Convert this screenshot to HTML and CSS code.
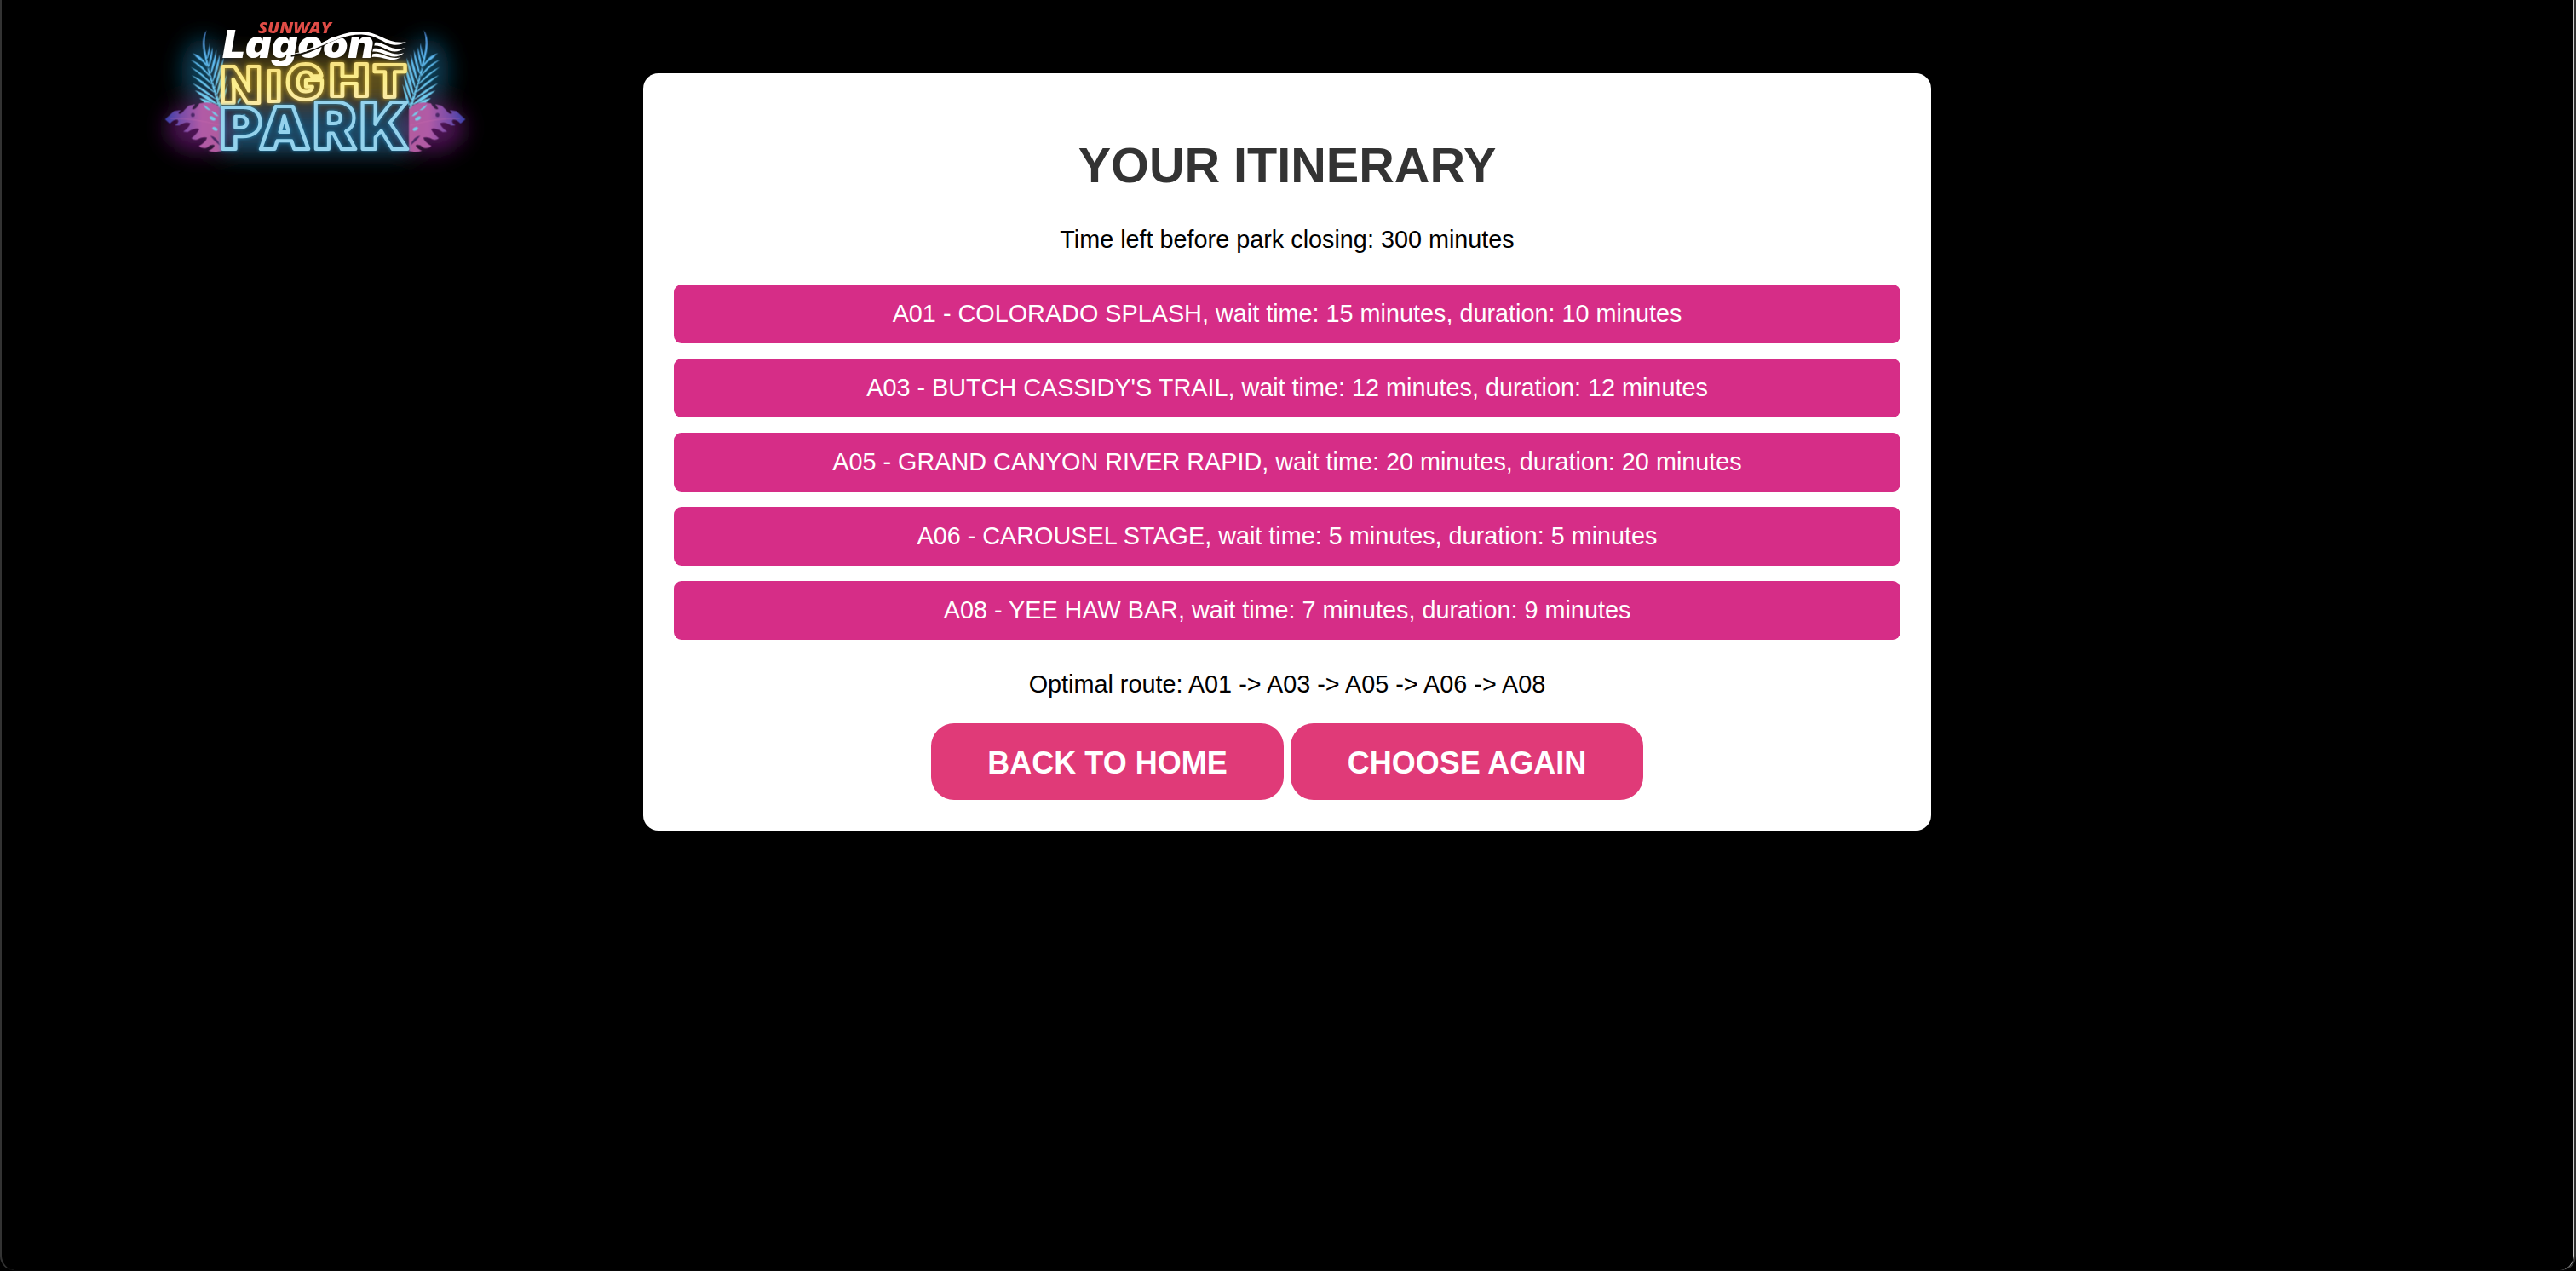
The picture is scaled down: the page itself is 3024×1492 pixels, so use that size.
FILE: index.html
```html
<!DOCTYPE html>
<html lang="en">
<head>
<meta charset="utf-8">
<title>Your Itinerary</title>
<link rel="stylesheet" href="styles.css">
</head>
<body>
<div class="page">
  <header class="brand">
    <svg class="logo" viewBox="0 0 1260 660" role="img" aria-label="Sunway Lagoon Night Park">
      <defs>
        <filter id="haze" x="-50%" y="-50%" width="200%" height="200%"><feGaussianBlur stdDeviation="38"/></filter>
        <linearGradient id="frond" x1="0" y1="0" x2="0" y2="1">
          <stop offset="0" stop-color="#4a83cf"/><stop offset=".35" stop-color="#5db9ef"/><stop offset="1" stop-color="#79d3ee"/>
        </linearGradient>
        <linearGradient id="leaf" x1="0" y1="0" x2="1" y2="0">
          <stop offset="0" stop-color="#3940a8"/><stop offset=".3" stop-color="#7b4da8"/><stop offset=".65" stop-color="#b15ba6"/><stop offset="1" stop-color="#b35c9f"/>
        </linearGradient>
        <linearGradient id="gold" x1="0" y1="0" x2="0" y2="1">
          <stop offset="0" stop-color="#f5dc7c"/><stop offset=".5" stop-color="#fbee8d"/><stop offset="1" stop-color="#fbe7b0"/>
        </linearGradient>
        <g id="plant">
          <path fill="url(#frond)" d="M247 106Q225 140 240 196Q252 260 296 400L300 375Q262 280 248 200Q234 150 247 106Z
            M260 150Q262 184 247 216Q250 184 260 150Z
            M197 188Q236 194 258 250Q230 206 197 188Z M190 210Q236 224 266 280Q230 236 190 210Z
            M191 236Q238 256 272 304Q232 268 191 236Z M194 264Q242 282 280 332Q236 298 194 264Z
            M196 292Q244 312 286 354Q238 328 196 292Z M206 318Q252 330 292 372Q244 354 206 318Z
            M222 345Q262 350 298 392Q252 376 222 345Z M204 194Q232 206 248 226Q222 214 204 194Z
            M268 166Q272 204 252 246Q256 206 268 166Z M282 175Q284 222 258 270Q266 224 282 175Z
            M294 190Q294 242 266 296Q276 240 294 190Z M308 203Q302 262 274 320Q284 258 308 203Z
            M312 232Q308 292 281 342Q289 284 312 232Z M318 262Q312 320 288 362Q295 312 318 262Z
            M322 296Q314 350 294 384Q300 340 322 296Z"/>
          <path fill="url(#leaf)" d="M101 420L133 391L156 388L148 399Q157 405 168 389L184 372L207 367L196 383Q208 391 222 364Q255 356 281 368L300 385V532L282 535Q266 536 254 531Q273 524 276 511Q264 506 249 520Q232 525 220 514Q246 500 249 484Q229 480 216 491Q204 494 194 487Q215 470 222 454Q207 448 181 465L165 464Q187 448 190 434Q174 426 151 442L136 442Q154 429 145 422Q134 419 118 435Z"/>
          <path fill="none" stroke="#d070b0" stroke-width="2" opacity=".6" d="M120 417Q210 416 296 442"/>
          <circle cx="199" cy="405" r="7" fill="#4d2868"/>
          <path fill="#4d2868" d="M260 478Q284 480 294 512Q274 496 260 478Z"/>
          <ellipse cx="268" cy="417" rx="11" ry="6" transform="rotate(28 268 417)" fill="#76cbea"/>
          <ellipse cx="277" cy="454" rx="10" ry="6" transform="rotate(28 277 454)" fill="#76cbea"/>
          <path fill="#76cbea" d="M236 368Q250 376 263 389Q242 388 236 368ZM265 390Q280 394 290 410Q270 405 265 390Z"/>
        </g>
      </defs>

      <g filter="url(#haze)">
        <ellipse cx="235" cy="250" rx="75" ry="115" fill="#176083" opacity=".65"/>
        <ellipse cx="1025" cy="250" rx="75" ry="115" fill="#176083" opacity=".65"/>
        <ellipse cx="220" cy="450" rx="115" ry="85" fill="#7a1b86" opacity=".65"/>
        <ellipse cx="1040" cy="450" rx="115" ry="85" fill="#7a1b86" opacity=".65"/>
        <rect x="320" y="200" width="620" height="165" fill="#5d4f1d"/>
        <rect x="300" y="385" width="660" height="155" fill="#1d4a66"/>
      </g>
      <use href="#plant"/>
      <use href="#plant" transform="matrix(-1 0 0 1 1260 0)"/>
      <path fill="#76cbea" d="M356 358Q358 346 370 346Q366 360 356 366ZM364 414Q374 402 384 402Q384 414 376 417Z"/>

      <g class="neon-word night">
        <text x="296" y="363" textLength="145" lengthAdjust="spacingAndGlyphs">N</text>
        <text class="small-i" transform="translate(459 356) scale(1.18 1)">I</text>
        <text class="wide-g" transform="translate(527 348) scale(1.07 1)">G</text>
        <text class="short" transform="translate(680 340) scale(1.19 1)">H</text>
        <text class="short" transform="translate(834 343) scale(1.09 1)">T</text>
      </g>
      <g class="neon-word park">
        <text transform="translate(294 524) scale(1.12 1)">P</text>
        <text class="mid" transform="translate(433 524) scale(1.08 1)">A</text>
        <text class="tall" transform="translate(622 524) scale(1.02 1)">R</text>
        <text class="tall" transform="translate(786 524) scale(1.02 1)">K</text>
      </g>

      <text class="lagoon" x="304" y="204" textLength="534" lengthAdjust="spacingAndGlyphs">Lagoon</text>
      <path fill="none" stroke="#15130b" stroke-width="6" d="M545 197C640 186 680 130 765 122"/>
      <g fill="#fff">
        <path d="M510 194C630 190 675 113 790 111C855 110 880 157 951 148C890 181 862 124 800 122C700 116 640 194 510 194Z"/>
        <path d="M840 150C870 143 895 183 946 169C897 203 875 158 838 161Z"/>
        <path d="M834 171C870 163 895 201 943 187C898 220 875 178 832 182Z"/>
        <path d="M832 190C865 181 890 213 932 202C893 224 870 196 830 201Z"/>
      </g>
      <text class="sunway" x="429" y="117" textLength="258" lengthAdjust="spacingAndGlyphs">SUNWAY</text>
    </svg>
  </header>

  <main class="card">
    <h1 class="title">YOUR ITINERARY</h1>
    <p class="line">Time left before park closing: 300 minutes</p>
    <ul class="rides">
      <li class="ride">A01 - COLORADO SPLASH, wait time: 15 minutes, duration: 10 minutes</li>
      <li class="ride">A03 - BUTCH CASSIDY'S TRAIL, wait time: 12 minutes, duration: 12 minutes</li>
      <li class="ride">A05 - GRAND CANYON RIVER RAPID, wait time: 20 minutes, duration: 20 minutes</li>
      <li class="ride">A06 - CAROUSEL STAGE, wait time: 5 minutes, duration: 5 minutes</li>
      <li class="ride">A08 - YEE HAW BAR, wait time: 7 minutes, duration: 9 minutes</li>
    </ul>
    <p class="line">Optimal route: A01 -&gt; A03 -&gt; A05 -&gt; A06 -&gt; A08</p>
    <div class="actions">
      <button class="action" type="button">BACK TO HOME</button>
      <button class="action" type="button">CHOOSE AGAIN</button>
    </div>
  </main>
</div>
<div class="window-edge"></div>
</body>
</html>
```
FILE: styles.css
```css
* { box-sizing: border-box; }

body {
  margin: 0;
  background: #000;
  color: #000;
  font: 28.8px/32px "Liberation Sans", Arial, sans-serif;
}

.page {
  display: grid;
  grid-template-columns: 755px 1512px;
  align-items: start;
  min-height: 1492px;
}

.brand { padding-left: 160px; }
.logo { display: block; width: 420px; height: 220px; }

.neon-word {
  font: 900 177px Inter, "Liberation Sans", sans-serif;
  fill: none;
  stroke-width: 12;
  stroke-linejoin: round;
}
.small-i { font-size: 148px; }
.wide-g { font-size: 165px; }
.short { font-size: 157px; }
.night { stroke: url(#gold); filter: drop-shadow(0 0 8px #c9a82c); }
.park { font-size: 202px; stroke: #94d2ec; filter: drop-shadow(0 0 7px #2583ae); }
.mid { font-size: 208px; }
.tall { font-size: 225px; }
.lagoon {
  font: italic 900 138px Inter, "Liberation Sans", sans-serif;
  fill: #fff;
}
.sunway { font: italic 800 54px "Open Sans", "Noto Sans", sans-serif; fill: #df4c46; }

.card {
  margin-top: 86px;
  height: 889px;
  padding: 75px 36px 36px;
  border-radius: 18px;
  background: #fff;
  text-align: center;
}

.title {
  margin: 0 0 38px;
  color: #333;
  font-size: 57.6px;
  line-height: 66px;
}

.line { margin: 0; }

.rides {
  display: flex;
  flex-direction: column;
  gap: 18px;
  margin: 37px 0 36px;
  padding: 0;
  list-style: none;
}

.ride {
  height: 69px;
  border-radius: 9px;
  background: #d62d87;
  color: #fff;
  line-height: 69px;
}

.actions {
  display: flex;
  justify-content: center;
  gap: 8px;
  margin-top: 30px;
}

.action {
  width: 414px;
  height: 90px;
  padding: 4px 0 0;
  border: 0;
  border-radius: 27px;
  background: #e03a78;
  color: #fff;
  font: bold 36px "Liberation Sans", Arial, sans-serif;
}

.window-edge {
  position: absolute;
  inset: -30px 0 0;
  border: solid #333;
  border-width: 0 2px 1px;
  border-radius: 0 0 18px 18px;
  border-bottom-color: #080808;
  box-shadow: inset -1px 0 0 #ccc;
  pointer-events: none;
}
```
